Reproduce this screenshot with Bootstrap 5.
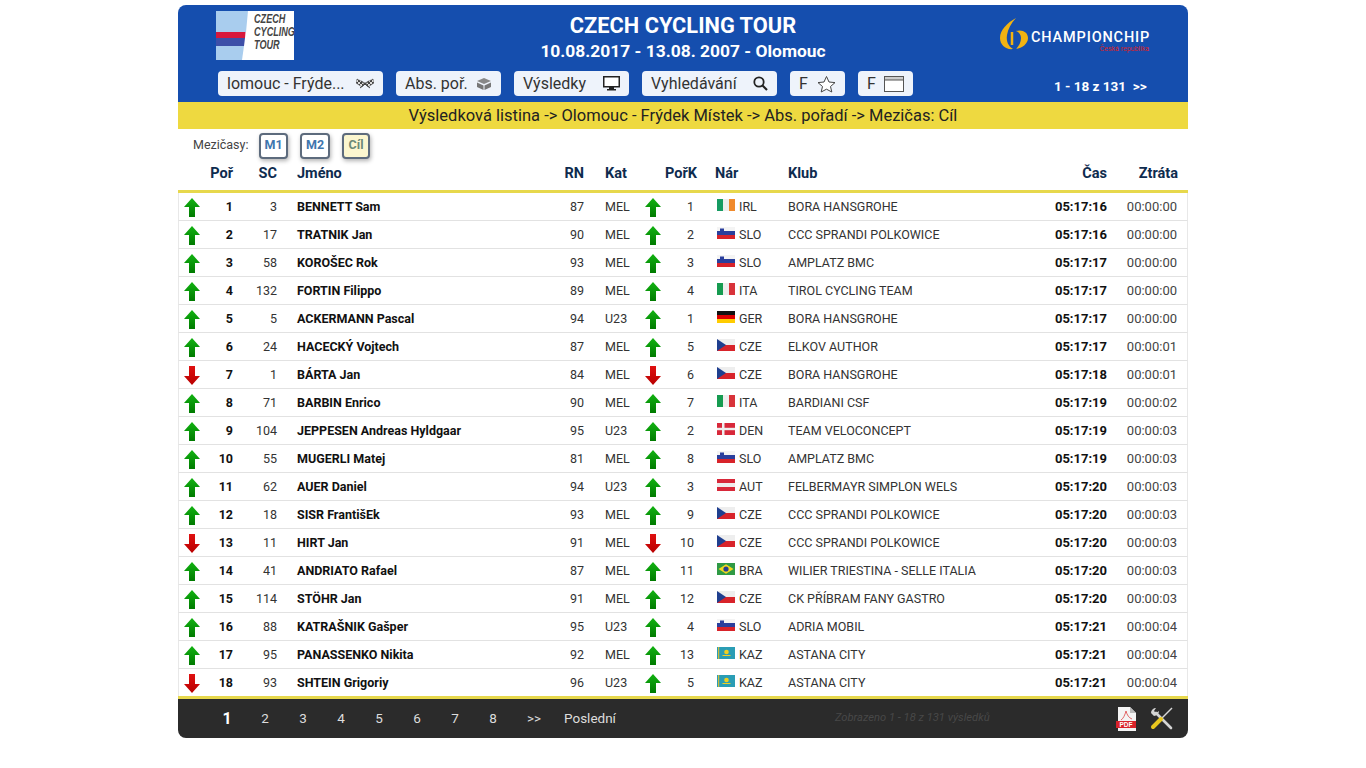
<!DOCTYPE html>
<html lang="cs">
<head>
    <meta charset="UTF-8">
    <title>Czech Cycling Tour - výsledky</title>
    <link href="https://cdn.jsdelivr.net/npm/bootstrap@5.3.2/dist/css/bootstrap.min.css" rel="stylesheet">
    <style>
        body { background: #fff; font-family: Roboto, "Noto Sans", sans-serif; color: #222; }
        .wrap { width: 1010px; margin: 5px 0 0 178px; }
        .head-blue { background: #154eae; height: 97px; border-radius: 8px 8px 0 0; color: #fff; }
        .head-top { height: 66px; }
        .head-side { width: 200px; }
        .logo-box { width: 78px; height: 49px; background: #fff; margin: 6px 0 0 38px; }
        .logo-txt { font: italic bold 13px/13px "Liberation Sans", sans-serif; color: #444; left: 38px; top: 1px; transform: scaleX(.7); transform-origin: left top; }
        .head-title { font-size: 21.8px; font-weight: 700; line-height: 28px; padding-top: 7px; }
        .head-date { font-size: 17.4px; font-weight: 700; line-height: 22px; }
        .chip-logo { padding: 12px 0 0 11px; }
        .chip-text { padding-top: 13px; margin-left: -2px; }
        .chip-name { font-size: 14.5px; font-weight: 500; line-height: 15px; letter-spacing: .85px; }
        .chip-sub { font-size: 7px; color: #d8232a; line-height: 8px; padding-right: 1px; }
        .tool-row { padding-left: 40px; gap: 13px; height: 25px; }
        .tool-btn { height: 25px; padding: 0 9px; background: #eef3fb; border: 0; border-radius: 4px; font-size: 16px; color: #333; white-space: nowrap; overflow: hidden; }
        .tool-btn:hover { background: #eef3fb; }
        .w-a { width: 165px; } .w-b { width: 105px; } .w-c { width: 115px; } .w-d { width: 135px; } .w-e { width: 55px; }
        .page-info { margin-left: 128px; padding-top: 6px; font-size: 13.5px; font-weight: 700; white-space: pre; }
        .crumb { background: #eed940; height: 27px; line-height: 27px; font-size: 16.5px; color: #222; }
        .split-row { height: 31px; padding: 2px 0 0 15px; gap: 12px; font-size: 12.5px; color: #444; }
        .split-label { width: 54px; white-space: nowrap; }
        .split-btn { height: 26px; width: 30px; padding: 0; border: 2px solid #5d6b7d; border-radius: 4px; background: #fff; font-size: 12.5px; font-weight: 700; color: #3f76ae; box-shadow: 1px 2px 4px rgba(0,0,0,.3); }
        .split-first { width: 29px; }
        .split-on { width: 28px; background: #fbf6cf; color: #6b8a77; }
        .res-table { table-layout: fixed; width: 1010px; font-size: 12.5px; border-collapse: separate; border-spacing: 0; }
        .res-table col:nth-child(1) { width: 28px; }
        .res-table col:nth-child(2) { width: 27px; }
        .res-table col:nth-child(3) { width: 44px; }
        .res-table col:nth-child(4) { width: 283px; }
        .res-table col:nth-child(5) { width: 24px; }
        .res-table col:nth-child(6) { width: 56px; }
        .res-table col:nth-child(7) { width: 25px; }
        .res-table col:nth-child(8) { width: 29px; }
        .res-table col:nth-child(9) { width: 94px; }
        .res-table col:nth-child(10) { width: 252px; }
        .res-table col:nth-child(11) { width: 67px; }
        .res-table col:nth-child(12) { width: 81px; }
        .res-table th { height: 33px; padding: 0 0 3px; font-size: 14.5px; font-weight: 700; color: #0e2b4e; border-bottom: 3px solid #e7d84c; vertical-align: middle; background: #fff; box-shadow: none; }
        .res-table td { height: 28px; padding: 2px 0 0; border-bottom: 1px solid #e2e2e2; vertical-align: middle; background: #fff; box-shadow: none; color: #333; white-space: nowrap; }
        .res-table tbody tr:last-child td { border-bottom: 0; height: 27px; }
        .res-table td:first-child { border-left: 1px solid #e8e8e8; }
        .res-table td:last-child { border-right: 1px solid #e8e8e8; }
        .res-table .num { text-align: right; }
        .res-table .last { text-align: right; padding-right: 10px; }
        .res-table td.last { color: #444; font-size: 13px; padding-top: 1px; }
        .res-table td.clock { font-size: 13px; padding-top: 1px; }
        .res-table .txl { padding-left: 21px; }
        .res-table .nm { padding-left: 20px; }
        .res-table .ctr { text-align: center; }
        .res-table .hi { font-weight: 700; color: #111; }
        .res-table .arr1 { padding-left: 5px; }
        .flag-ic { width: 18px; height: 12px; vertical-align: 0; margin: 0 4px 0 2px; }
        .arrow-ic { width: 16px; height: 19px; display: block; }
        .res-table .ctr .arrow-ic { margin: 0 auto; }
        .foot-bar { background: #2b2b2b; height: 39px; border-top: 3px solid #e7d84c; box-sizing: content-box; border-radius: 0 0 8px 8px; padding-left: 30px; color: #ddd; font-size: 13.5px; }
        .page-num { width: 38px; text-align: center; color: #ddd; text-decoration: none; }
        .page-cur { font-size: 16px; font-weight: 700; color: #fff; }
        .page-more { padding-left: 6px; }
        .page-last { margin-left: 14px; width: auto; }
        .foot-note { margin-left: 219px; font-size: 11.2px; font-style: italic; color: #484848; width: 281px; }
        .tools-ic { margin-left: 14px; }
    </style>
</head>
<body>
    <svg width="0" height="0" class="d-block">
        <defs>
            <linearGradient id="gr" x1="0" x2="0" y1="0" y2="1"><stop offset="0" stop-color="#12b312"/><stop offset="1" stop-color="#007a00"/></linearGradient>
            <linearGradient id="rd" x1="0" x2="0" y1="0" y2="1"><stop offset="0" stop-color="#e01010"/><stop offset="1" stop-color="#b80000"/></linearGradient>
            <pattern id="chk" width="4" height="4" patternUnits="userSpaceOnUse"><rect width="4" height="4" fill="#ddd"/><rect width="2" height="2" fill="#444"/><rect x="2" y="2" width="2" height="2" fill="#444"/></pattern>
            <symbol id="up" viewBox="0 0 16 19"><path d="M8 0 16 9H11V19H5V9H0Z" fill="url(#gr)"/></symbol>
            <symbol id="down" viewBox="0 0 16 19"><path d="M8 19 0 10H5V0H11V10H16Z" fill="url(#rd)"/></symbol>
            <symbol id="IRL" viewBox="0 0 18 12"><rect width="6" height="12" fill="#169b62"/><rect x="6" width="6" height="12" fill="#eee"/><rect x="12" width="6" height="12" fill="#f08a2c"/></symbol>
            <symbol id="SLO" viewBox="0 0 18 12"><rect width="18" height="4" fill="#f4f4f4"/><rect y="4" width="18" height="4" fill="#2a3f9d"/><rect y="8" width="18" height="4" fill="#d8232a"/><path d="M3 1.5h4v3q-2 2.5-4 0Z" fill="#2a3f9d"/></symbol>
            <symbol id="ITA" viewBox="0 0 18 12"><rect width="6" height="12" fill="#169b50"/><rect x="6" width="6" height="12" fill="#eee"/><rect x="12" width="6" height="12" fill="#d8333a"/></symbol>
            <symbol id="GER" viewBox="0 0 18 12"><rect width="18" height="4" fill="#111"/><rect y="4" width="18" height="4" fill="#d00"/><rect y="8" width="18" height="4" fill="#fc0"/></symbol>
            <symbol id="CZE" viewBox="0 0 18 12"><rect width="18" height="6" fill="#eee"/><rect y="6" width="18" height="6" fill="#d8232a"/><path d="M0 0 9 6 0 12Z" fill="#1f3f8f"/></symbol>
            <symbol id="DEN" viewBox="0 0 18 12"><rect width="18" height="12" fill="#d8283a"/><rect x="5" width="2.5" height="12" fill="#eee"/><rect y="4.8" width="18" height="2.4" fill="#eee"/></symbol>
            <symbol id="AUT" viewBox="0 0 18 12"><rect width="18" height="12" fill="#d8283a"/><rect y="4" width="18" height="4" fill="#eee"/></symbol>
            <symbol id="BRA" viewBox="0 0 18 12"><rect width="18" height="12" fill="#2f9a45"/><path d="M9 1.2 16.5 6 9 10.8 1.5 6Z" fill="#f3d81f"/><circle cx="9" cy="6" r="2.6" fill="#27408f"/></symbol>
            <symbol id="KAZ" viewBox="0 0 18 12"><rect width="18" height="12" fill="#2a9db5"/><circle cx="9.5" cy="5" r="2.3" fill="#f0d020"/><path d="M5.5 8h8v1h-8Z" fill="#f0d020"/><rect x="1" width="1.2" height="12" fill="#cdbb3c"/></symbol>
        </defs>
    </svg>

    <div class="wrap">
        <div class="head-blue">
            <div class="head-top d-flex">
                <div class="head-side">
                    <div class="logo-box position-relative">
                        <svg width="34" height="49" viewBox="0 0 34 49" class="d-block">
                            <path d="M0 0H32L30 21H0Z" fill="#a9cdee"/>
                            <path d="M0 21H29.5L29 27H0Z" fill="#d8183c"/>
                            <path d="M0 27H29L28 35H0Z" fill="#3d4fa8"/>
                            <path d="M0 35H28L26 49H0Z" fill="#a9cdee"/>
                        </svg>
                        <div class="logo-txt position-absolute">CZECH<br>CYCLING<br>TOUR</div>
                    </div>
                </div>
                <div class="flex-grow-1 text-center">
                    <div class="head-title">CZECH CYCLING TOUR</div>
                    <div class="head-date">10.08.2017 - 13.08. 2007 - Olomouc</div>
                </div>
                <div class="head-side chip-logo d-flex gap-1">
                    <svg width="30" height="34" viewBox="0 0 30 34">
                        <path d="M17 1C8 6 1 13 1 21c0 7 6 12 13 11-5-3-7-8-6-14C9 12 12 6 17 1Z" fill="#f1b312"/>
                        <path d="M17 14c6-2 12 1 12 7 0 6-6 10-12 11 3-3 5-7 5-11 0-3-2-6-5-7Z" fill="#f1b312"/>
                        <path d="M13 15v13" stroke="#f1b312" stroke-width="2.5"/>
                    </svg>
                    <div class="text-end chip-text">
                        <div class="chip-name">CHAMPIONCHIP</div>
                        <div class="chip-sub">Česká republika</div>
                    </div>
                </div>
            </div>
            <div class="tool-row d-flex align-items-center">
                <button class="btn tool-btn w-a d-flex justify-content-between align-items-center">
                    <span>lomouc - Frýde...</span>
                    <svg width="18" height="11" viewBox="0 0 18 11"><path d="M1 1 9 5 6 9 0 5Z" fill="url(#chk)" stroke="#555" stroke-width=".5"/><path d="M17 1 9 5 12 9 18 5Z" fill="url(#chk)" stroke="#555" stroke-width=".5"/><path d="M4 10 13 3M14 10 5 3" stroke="#444"/></svg>
                </button>
                <button class="btn tool-btn w-b d-flex justify-content-between align-items-center">
                    <span>Abs. poř.</span>
                    <svg width="16" height="14" viewBox="0 0 16 14"><path d="M8 1 15 4 8 7 1 4Z" fill="#888"/><path d="M1 5.5 7.5 8.5V13L1 10ZM15 5.5 8.5 8.5V13L15 10Z" fill="#777"/></svg>
                </button>
                <button class="btn tool-btn w-c d-flex justify-content-between align-items-center">
                    <span>Výsledky</span>
                    <svg width="17" height="15" viewBox="0 0 17 15"><rect x=".75" y=".75" width="15.5" height="10" fill="#fff" stroke="#222" stroke-width="1.5"/><rect x="6" y="11" width="5" height="2" fill="#222"/><rect x="4" y="13" width="9" height="1.5" fill="#222"/></svg>
                </button>
                <button class="btn tool-btn w-d d-flex justify-content-between align-items-center">
                    <span>Vyhledávání</span>
                    <svg width="15" height="15" viewBox="0 0 15 15"><circle cx="6" cy="6" r="4.7" fill="none" stroke="#222" stroke-width="1.8"/><path d="M9.5 9.5 14 14" stroke="#222" stroke-width="2.2"/></svg>
                </button>
                <button class="btn tool-btn w-e d-flex justify-content-between align-items-center">
                    <span>F</span>
                    <svg width="19" height="18" viewBox="0 0 19 18"><path d="M9.5 1.5 12 7 18 7.6 13.5 11.5 14.8 17 9.5 14.2 4.2 17 5.5 11.5 1 7.6 7 7Z" fill="#fff" stroke="#444"/></svg>
                </button>
                <button class="btn tool-btn w-e d-flex justify-content-between align-items-center">
                    <span>F</span>
                    <svg width="20" height="16" viewBox="0 0 20 16"><rect x=".5" y=".5" width="19" height="15" fill="#fff" stroke="#555"/><rect x=".5" y=".5" width="19" height="3.5" fill="#ccc" stroke="#555"/></svg>
                </button>
                <div class="page-info">1 - 18 z 131  &gt;&gt;</div>
            </div>
        </div>
        <div class="crumb text-center">Výsledková listina -&gt; Olomouc - Frýdek Místek -&gt; Abs. pořadí -&gt; Mezičas: Cíl</div>
        <div class="split-row d-flex align-items-center">
            <span class="split-label">Mezičasy:</span>
            <button class="btn split-btn split-first">M1</button>
            <button class="btn split-btn">M2</button>
            <button class="btn split-btn split-on">Cíl</button>
        </div>
        <table class="table mb-0 res-table">
            <colgroup>
                <col><col><col><col><col><col><col><col><col><col><col><col>
            </colgroup>
            <thead>
                <tr>
                    <th></th><th class="num">Poř</th><th class="num">SC</th><th class="nm">Jméno</th><th class="num">RN</th><th class="txl">Kat</th><th></th><th class="num">PořK</th><th class="txl">Nár</th><th>Klub</th><th class="num">Čas</th><th class="last">Ztráta</th>
                </tr>
            </thead>
            <tbody id="rows"></tbody>
        </table>
        <div class="foot-bar d-flex align-items-center">
            <a class="page-num page-cur" href="#">1</a>
            <a class="page-num" href="#">2</a>
            <a class="page-num" href="#">3</a>
            <a class="page-num" href="#">4</a>
            <a class="page-num" href="#">5</a>
            <a class="page-num" href="#">6</a>
            <a class="page-num" href="#">7</a>
            <a class="page-num" href="#">8</a>
            <a class="page-num page-more" href="#">&gt;&gt;</a>
            <a class="page-num page-last" href="#">Poslední</a>
            <div class="foot-note">Zobrazeno 1 - 18 z 131 výsledků</div>
            <svg width="20" height="24" viewBox="0 0 20 24">
                <path d="M2 0H14L20 6V24H2Z" fill="#f4f4f4"/><path d="M14 0V6H20Z" fill="#bbb"/>
                <path d="M10 4c-1 4-3 8-5 9m5-9c1 4 3 7 6 8" stroke="#d44" fill="none" stroke-width=".8"/>
                <rect x="0" y="14" width="20" height="7" fill="#d8232a"/>
                <text x="10" y="20" font-size="6.5" font-weight="700" fill="#fff" text-anchor="middle" font-family="Liberation Sans">PDF</text>
            </svg>
            <svg width="23" height="23" viewBox="0 0 23 23" class="tools-ic">
                <path d="M6 6 21 21" stroke="#d4d4d4" stroke-width="2.6" stroke-linecap="round"/>
                <path d="M1 6a5 5 0 0 1 5-5L4 4l2 2 3-2a5 5 0 0 1-5 5Z" fill="#d4d4d4"/>
                <path d="M22 1 11 12" stroke="#d8d8d8" stroke-width="1.5"/>
                <path d="M11 12 3 20" stroke="#e8c61e" stroke-width="4" stroke-linecap="round"/>
            </svg>
        </div>
    </div>

    <script>
        const data = [
            ['u',1,3,'BENNETT Sam',87,'MEL','u',1,'IRL','BORA HANSGROHE','05:17:16','00:00:00'],
            ['u',2,17,'TRATNIK Jan',90,'MEL','u',2,'SLO','CCC SPRANDI POLKOWICE','05:17:16','00:00:00'],
            ['u',3,58,'KOROŠEC Rok',93,'MEL','u',3,'SLO','AMPLATZ BMC','05:17:17','00:00:00'],
            ['u',4,132,'FORTIN Filippo',89,'MEL','u',4,'ITA','TIROL CYCLING TEAM','05:17:17','00:00:00'],
            ['u',5,5,'ACKERMANN Pascal',94,'U23','u',1,'GER','BORA HANSGROHE','05:17:17','00:00:00'],
            ['u',6,24,'HACECKÝ Vojtech',87,'MEL','u',5,'CZE','ELKOV AUTHOR','05:17:17','00:00:01'],
            ['d',7,1,'BÁRTA Jan',84,'MEL','d',6,'CZE','BORA HANSGROHE','05:17:18','00:00:01'],
            ['u',8,71,'BARBIN Enrico',90,'MEL','u',7,'ITA','BARDIANI CSF','05:17:19','00:00:02'],
            ['u',9,104,'JEPPESEN Andreas Hyldgaar',95,'U23','u',2,'DEN','TEAM VELOCONCEPT','05:17:19','00:00:03'],
            ['u',10,55,'MUGERLI Matej',81,'MEL','u',8,'SLO','AMPLATZ BMC','05:17:19','00:00:03'],
            ['u',11,62,'AUER Daniel',94,'U23','u',3,'AUT','FELBERMAYR SIMPLON WELS','05:17:20','00:00:03'],
            ['u',12,18,'SISR FrantišEk',93,'MEL','u',9,'CZE','CCC SPRANDI POLKOWICE','05:17:20','00:00:03'],
            ['d',13,11,'HIRT Jan',91,'MEL','d',10,'CZE','CCC SPRANDI POLKOWICE','05:17:20','00:00:03'],
            ['u',14,41,'ANDRIATO Rafael',87,'MEL','u',11,'BRA','WILIER TRIESTINA - SELLE ITALIA','05:17:20','00:00:03'],
            ['u',15,114,'STÖHR Jan',91,'MEL','u',12,'CZE','CK PŘÍBRAM FANY GASTRO','05:17:20','00:00:03'],
            ['u',16,88,'KATRAŠNIK Gašper',95,'U23','u',4,'SLO','ADRIA MOBIL','05:17:21','00:00:04'],
            ['u',17,95,'PANASSENKO Nikita',92,'MEL','u',13,'KAZ','ASTANA CITY','05:17:21','00:00:04'],
            ['d',18,93,'SHTEIN Grigoriy',96,'U23','u',5,'KAZ','ASTANA CITY','05:17:21','00:00:04']
        ];
        const arrow = a => `<svg class="arrow-ic"><use href="#${a === 'u' ? 'up' : 'down'}"/></svg>`;
        document.getElementById('rows').innerHTML = data.map(r => `<tr>
            <td class="arr1">${arrow(r[0])}</td>
            <td class="num hi">${r[1]}</td>
            <td class="num">${r[2]}</td>
            <td class="nm hi">${r[3]}</td>
            <td class="num">${r[4]}</td>
            <td class="txl">${r[5]}</td>
            <td class="ctr">${arrow(r[6])}</td>
            <td class="num">${r[7]}</td>
            <td class="txl"><svg class="flag-ic"><use href="#${r[8]}"/></svg>${r[8]}</td>
            <td>${r[9]}</td>
            <td class="num hi clock">${r[10]}</td>
            <td class="last">${r[11]}</td>
        </tr>`).join('');
    </script>
    <script src="https://cdn.jsdelivr.net/npm/bootstrap@5.3.2/dist/js/bootstrap.bundle.min.js"></script>
</body>
</html>
